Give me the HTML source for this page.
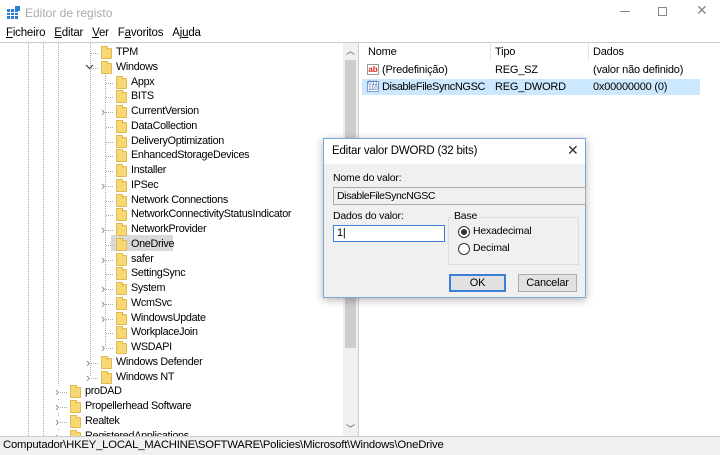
<!DOCTYPE html>
<html><head><meta charset="utf-8"><style>
*{margin:0;padding:0;box-sizing:border-box}
body{width:720px;height:455px;overflow:hidden;background:#fff;font-family:"Liberation Sans",sans-serif;font-size:11px;letter-spacing:-0.2px;color:#000;position:relative}
.a{position:absolute;white-space:nowrap}
.f{position:absolute;width:11px;height:11px;background:#f8d775;border:1px solid #e2b94a;border-radius:1px}
.f:before{content:"";position:absolute;left:-1px;top:-3px;width:5px;height:3px;background:#f8d775;border:1px solid #e2b94a;border-bottom:none}
.ex{position:absolute;color:#888;font-size:13px;background:#fff;line-height:12px}
.vl{position:absolute;width:0;border-left:1px dotted #aaa}
.hl{position:absolute;height:0;width:7px;border-top:1px dotted #aaa}
.t{font-size:10.8px;letter-spacing:-0.3px}
</style></head><body>
<svg class="a" style="left:6px;top:6px" width="14" height="14"><rect x="1" y="3" width="11" height="10" fill="#2a7fd4"/><g stroke="#fff" stroke-width="1"><line x1="1" y1="6.5" x2="12" y2="6.5"/><line x1="1" y1="9.5" x2="12" y2="9.5"/><line x1="4.5" y1="3" x2="4.5" y2="13"/><line x1="8.5" y1="3" x2="8.5" y2="13"/></g><rect x="9" y="0" width="5" height="5" fill="#2a7fd4"/></svg>
<div class="a" style="left:25px;top:6px;color:#aaa;font-size:12px;letter-spacing:0">Editor de registo</div>
<div class="a" style="left:620px;top:11px;width:10px;border-top:1px solid #888"></div>
<div class="a" style="left:658px;top:7px;width:9px;height:9px;border:1px solid #888"></div>
<div class="a" style="left:696px;top:2px;color:#888;font-size:14px">✕</div>
<div class="a" style="left:6px;top:27px;font-size:11.5px"><u>F</u>icheiro&nbsp;&nbsp;&nbsp;<u>E</u>ditar&nbsp;&nbsp;&nbsp;<u>V</u>er&nbsp;&nbsp;&nbsp;F<u>a</u>voritos&nbsp;&nbsp;&nbsp;Aj<u>u</u>da</div>
<div class="a" style="left:0;top:42px;width:720px;border-top:1px solid #ccc"></div>
<div class="a" style="left:0;top:43px;width:359px;height:393px;border-right:1px solid #ccc;overflow:hidden">
<div class="vl" style="left:28px;top:0;height:393px"></div>
<div class="vl" style="left:43px;top:0;height:393px"></div>
<div class="vl" style="left:58px;top:0;height:393px"></div>
<div class="vl" style="left:90px;top:0;height:333px"></div>
<div class="vl" style="left:105px;top:32px;height:272px"></div>
<div class="a" style="left:111px;top:192px;width:62px;height:16px;background:#d9d9d9"></div>
</div>
<div id="tree"></div>
<div class="a" style="left:343px;top:43px;width:15px;height:393px;background:#f0f0f0"></div>
<div class="a" style="left:345px;top:60px;width:11px;height:288px;background:#cdcdcd"></div>
<div class="a" style="left:346px;top:44px;color:#555;font-size:9px">︿</div>
<div class="a" style="left:346px;top:422px;color:#555;font-size:9px">﹀</div>
<div class="a" style="left:368px;top:46px">Nome</div>
<div class="a" style="left:495px;top:46px">Tipo</div>
<div class="a" style="left:593px;top:46px">Dados</div>
<div class="a" style="left:490px;top:43px;height:18px;border-left:1px solid #e5e5e5"></div>
<div class="a" style="left:588px;top:43px;height:18px;border-left:1px solid #e5e5e5"></div>
<div class="a" style="left:362px;top:79px;width:338px;height:16px;background:#cce8ff"></div>
<div class="a" style="left:367px;top:64px;width:12px;height:11px;border:1px solid #999;background:#fff;color:#d22;font-size:8px;line-height:9px;font-weight:bold;text-align:center;letter-spacing:0">ab</div>
<div class="a" style="left:367px;top:81px;width:12px;height:11px;border:1px solid #7a9cc6;background:#fff;color:#2a5ca8;font-size:6px;line-height:5px;text-align:center;letter-spacing:0">011<br>110</div>
<div class="a" style="left:382px;top:64px">(Predefinição)</div>
<div class="a" style="left:495px;top:64px">REG_SZ</div>
<div class="a" style="left:593px;top:64px">(valor não definido)</div>
<div class="a" style="left:382px;top:81px;letter-spacing:-0.4px">DisableFileSyncNGSC</div>
<div class="a" style="left:495px;top:81px">REG_DWORD</div>
<div class="a" style="left:593px;top:81px">0x00000000 (0)</div>
<div class="a" style="left:0;top:436px;width:720px;height:19px;background:#f0f0f0;border-top:1px solid #ccc"></div>
<div class="a" style="left:3px;top:439px;font-size:11.3px;letter-spacing:-0.2px">Computador\HKEY_LOCAL_MACHINE\SOFTWARE\Policies\Microsoft\Windows\OneDrive</div>
<div class="a" style="left:323px;top:138px;width:263px;height:160px;background:#f0f0f0;border:1px solid #7aa7d8;box-shadow:0 2px 8px rgba(0,0,0,.3)">
<div class="a" style="left:0;top:0;width:261px;height:25px;background:#fff"></div>
<div class="a" style="left:8px;top:6px;font-size:11.5px">Editar valor DWORD (32 bits)</div>
<div class="a" style="left:243px;top:3px;font-size:14px;color:#333">✕</div>
<div class="a" style="left:9px;top:33px;font-size:10.5px">Nome do valor:</div>
<div class="a" style="left:9px;top:48px;width:253px;height:18px;background:#f0f0f0;border:1px solid #ababab;font-size:10.5px;padding:2px 3px;letter-spacing:-.4px">DisableFileSyncNGSC</div>
<div class="a" style="left:9px;top:71px;font-size:10.5px">Dados do valor:</div>
<div class="a" style="left:9px;top:86px;width:112px;height:17px;background:#fff;border:1px solid #3c7fd6;font-size:11px;padding:1px 3px">1|</div>
<div class="a" style="left:124px;top:78px;width:131px;height:48px;border:1px solid #dcdcdc"></div>
<div class="a" style="left:129px;top:71px;font-size:10.5px;background:#f0f0f0;padding:0 1px">Base</div>
<div class="a" style="left:134px;top:87px;width:12px;height:12px;border:1px solid #333;border-radius:50%;background:#fff"><div style="margin:2px;width:6px;height:6px;border-radius:50%;background:#333"></div></div>
<div class="a" style="left:149px;top:86px;font-size:10.5px">Hexadecimal</div>
<div class="a" style="left:134px;top:104px;width:12px;height:12px;border:1px solid #333;border-radius:50%;background:#fff"></div>
<div class="a" style="left:149px;top:103px;font-size:10.5px">Decimal</div>
<div class="a" style="left:125px;top:135px;width:57px;height:18px;background:#e1e1e1;border:2px solid #3c7fd6;font-size:11px;text-align:center;line-height:14px">OK</div>
<div class="a" style="left:194px;top:135px;width:59px;height:18px;background:#e1e1e1;border:1px solid #adadad;font-size:11px;text-align:center;line-height:16px">Cancelar</div>
</div>
<script>
var rows=[["TPM",116,0],["Windows",116,2],["Appx",131,0],["BITS",131,0],["CurrentVersion",131,1],["DataCollection",131,0],["DeliveryOptimization",131,0],["EnhancedStorageDevices",131,0],["Installer",131,0],["IPSec",131,1],["Network Connections",131,0],["NetworkConnectivityStatusIndicator",131,0],["NetworkProvider",131,1],["OneDrive",131,0],["safer",131,1],["SettingSync",131,0],["System",131,1],["WcmSvc",131,1],["WindowsUpdate",131,1],["WorkplaceJoin",131,0],["WSDAPI",131,1],["Windows Defender",116,1],["Windows NT",116,1],["proDAD",85,1],["Propellerhead Software",85,1],["Realtek",85,1],["RegisteredApplications",85,1]];
var h="";rows.forEach(function(r,i){var y=44+i*14.75;
h+='<div class="f" style="left:'+(r[1]-15)+'px;top:'+(y+4)+'px"></div>';
h+='<div class="hl" style="left:'+(r[1]-25)+'px;top:'+(y+9)+'px"></div>';
if(r[2]==1)h+='<div class="ex" style="left:'+(r[1]-30)+'px;top:'+(y+3)+'px">›</div>';
if(r[2]==2)h+='<svg class="a" style="left:'+(r[1]-31)+'px;top:'+(y+5)+'px" width="9" height="6"><path d="M1 1 L4.5 4.5 L8 1" fill="none" stroke="#444" stroke-width="1.2"/></svg>';
h+='<div class="a t" style="left:'+r[1]+'px;top:'+(y+2)+'px">'+r[0]+'</div>';});
var t=document.createElement('div');t.className='a';t.style.cssText='left:0;top:0;width:343px;height:436px;overflow:hidden';t.innerHTML=h;document.getElementById('tree').appendChild(t);
</script>
</body></html>
